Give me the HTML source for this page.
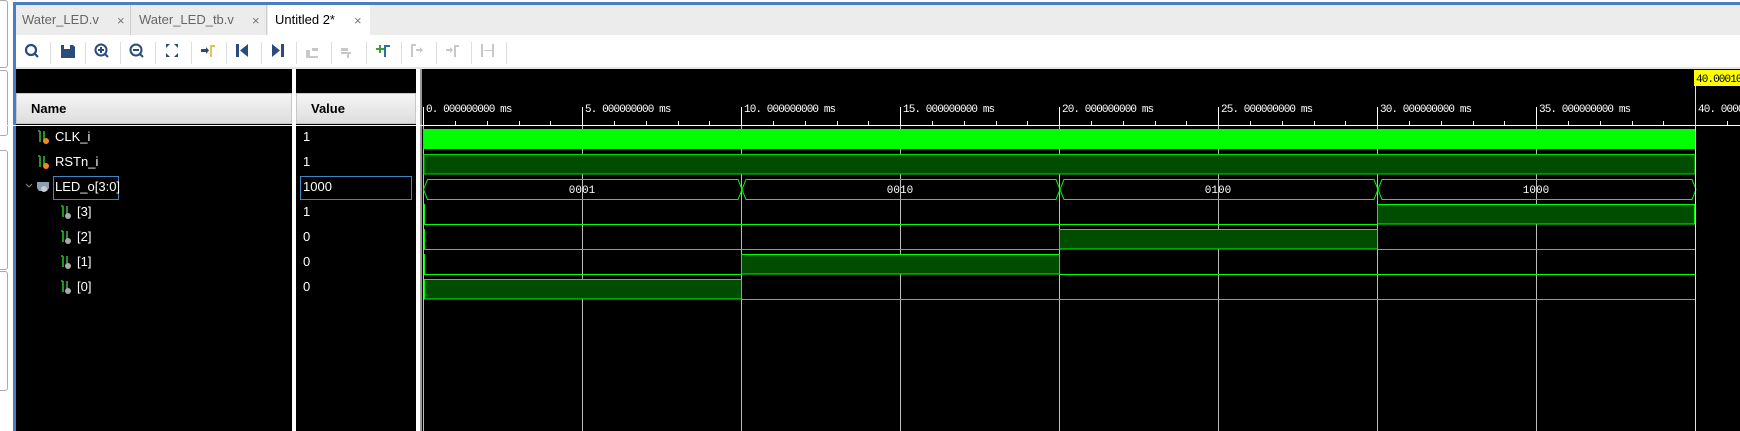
<!DOCTYPE html>
<html><head><meta charset="utf-8"><style>
*{margin:0;padding:0;box-sizing:border-box}
body{width:1740px;height:431px;overflow:hidden;background:#fff;position:relative;font-family:"Liberation Sans",sans-serif}
.a{position:absolute}
.tab{position:absolute;top:5px;height:30px;font-size:13px;line-height:30px;color:#666}
.tab span.x{position:absolute;font-size:13px;color:#777}
.sep{position:absolute;top:42px;width:1px;height:22px;background:#ddd}
.nm{position:absolute;color:#fff;font-size:13px}
</style></head><body>
<!-- left strip -->
<div class="a" style="left:-6px;top:0;width:14px;height:68px;border:1px solid #aaa;border-radius:3px"></div>
<div class="a" style="left:-6px;top:70px;width:14px;height:66px;border:1px solid #aaa;border-radius:3px"></div>
<div class="a" style="left:-6px;top:150px;width:14px;height:120px;border:1px solid #aaa;border-radius:3px"></div>
<div class="a" style="left:-6px;top:271px;width:14px;height:120px;border:1px solid #aaa;border-radius:3px"></div>
<!-- frame -->
<div class="a" style="left:13px;top:2px;width:1727px;height:3px;background:#4a7cc9"></div>
<div class="a" style="left:13px;top:2px;width:3px;height:429px;background:#4a7cc9"></div>
<div class="a" style="left:16px;top:5px;width:1724px;height:30px;background:#ececec"></div>
<div class="tab" style="left:16px;width:115px;border-right:1px solid #ccc"><span style="position:absolute;left:6px">Water_LED.v</span><span class="x" style="left:101px;top:1px">×</span></div>
<div class="tab" style="left:132px;width:135px;border-right:1px solid #ccc"><span style="position:absolute;left:7px">Water_LED_tb.v</span><span class="x" style="left:120px;top:1px">×</span></div>
<div class="tab" style="left:268px;width:102px;background:#fff;color:#000"><span style="position:absolute;left:7px">Untitled 2*</span><span class="x" style="left:86px;top:1px">×</span></div>
<div class="a" style="left:16px;top:35px;width:1724px;height:32px;background:#fff"></div>
<div class="a" style="left:16px;top:67px;width:1724px;height:2px;background:#e4e4e4"></div>
<!-- toolbar -->
<svg class="a" style="left:0;top:36px" width="520" height="32">
<g fill="none" stroke="#2b4a7e" stroke-width="2.2"><circle cx="31" cy="14" r="5"/><line x1="35" y1="18" x2="38" y2="21"/></g>
<path d="M61 9h12l2 2v11h-14z" fill="#2b4a7e"/><rect x="64" y="9" width="6" height="4" fill="#fff"/>
<g fill="none" stroke="#2b4a7e" stroke-width="2"><circle cx="101" cy="14" r="5.5"/><line x1="105" y1="18" x2="108" y2="21"/><line x1="98" y1="14" x2="104" y2="14"/><line x1="101" y1="11" x2="101" y2="17"/></g>
<g fill="none" stroke="#2b4a7e" stroke-width="2"><circle cx="136" cy="14" r="5.5"/><line x1="140" y1="18" x2="143" y2="21"/><line x1="133" y1="14" x2="139" y2="14"/></g>
<g fill="#2b4a7e"><path d="M166 8h4l-4 4z"/><path d="M178 8h-4l4 4z"/><path d="M166 21h4l-4-4z"/><path d="M178 21h-4l4-4z"/></g>
<path d="M201 13h5v-2l3 3.5-3 3.5v-2h-5z" fill="#2b4a7e"/><path d="M210 9h5v2h-3v10h-2z" fill="#e3c35a"/>
<rect x="236" y="8" width="3" height="13" fill="#2b4a7e"/><path d="M248 8v13l-8-6.5z" fill="#2b4a7e"/>
<rect x="281" y="8" width="3" height="13" fill="#2b4a7e"/><path d="M272 8v13l8-6.5z" fill="#2b4a7e"/>
<g fill="#c8c8c8"><path d="M306 14h4v6h8v2h-12zM312 12h6v3h-6z"/><path d="M341 12h7v3h-7zM341 16h10v2h-2v4h-2v-4h-6z"/><path d="M355 12h-1z"/></g>
<path d="M376 12h3v-3h2v3h3v2h-3v3h-2v-3h-3z" fill="#3aa23a"/><path d="M384 9h6v2h-4v10h-2z" fill="#2e6ea8"/>
<g fill="#c8c8c8"><path d="M411 8h5v2h-3v11h-2z"/><path d="M416 13h4v-2l3 3-3 3v-2h-4z"/><path d="M446 13h4v-2l3 3-3 3v-2h-4z"/><path d="M454 9h5v2h-3v10h-2z"/><rect x="481" y="8" width="2" height="13"/><rect x="492" y="8" width="2" height="13"/><rect x="484" y="14" width="8" height="1"/></g>
</svg>
<div class="sep" style="left:50px"></div><div class="sep" style="left:85px"></div><div class="sep" style="left:120px"></div><div class="sep" style="left:155px"></div><div class="sep" style="left:191px"></div><div class="sep" style="left:226px"></div><div class="sep" style="left:261px"></div><div class="sep" style="left:296px"></div><div class="sep" style="left:331px"></div><div class="sep" style="left:366px"></div><div class="sep" style="left:401px"></div><div class="sep" style="left:436px"></div><div class="sep" style="left:471px"></div><div class="sep" style="left:506px"></div>
<!-- panels -->
<div class="a" style="left:16px;top:69px;width:276px;height:362px;background:#000"></div>
<div class="a" style="left:292px;top:69px;width:4px;height:362px;background:#fff"></div>
<div class="a" style="left:296px;top:69px;width:120px;height:362px;background:#000"></div>
<div class="a" style="left:416px;top:69px;width:4px;height:362px;background:#fff"></div>
<div class="a" style="left:420px;top:69px;width:2px;height:362px;background:#999"></div>
<div class="a" style="left:422px;top:69px;width:1318px;height:362px;background:#000"></div>
<div class="a" style="left:16px;top:93px;width:276px;height:31px;background:linear-gradient(#f4f4f4,#dedede);border:1px solid #c8c8c8"></div>
<div class="a" style="left:296px;top:93px;width:120px;height:31px;background:linear-gradient(#f4f4f4,#dedede);border:1px solid #c8c8c8"></div>
<div class="nm" style="left:31px;top:101px;color:#000;font-weight:bold;font-size:13px">Name</div>
<div class="nm" style="left:311px;top:101px;color:#000;font-weight:bold;font-size:13px">Value</div>
<!-- icons for names -->
<svg class="a" style="left:16px;top:125px" width="80" height="180">
<g stroke="#2fb52f" stroke-width="1.6" fill="none"><path d="M24 6v11M28 6v11M24 6h-2"/><path d="M24 31v11M28 31v11M24 31h-2"/>
<path d="M47 81v11M51 81v11M47 81h-2"/><path d="M47 106v11M51 106v11M47 106h-2"/><path d="M47 131v11M51 131v11M47 131h-2"/><path d="M47 156v11M51 156v11M47 156h-2"/></g>
<circle cx="30" cy="16" r="3" fill="#f08a1c"/><circle cx="30" cy="41" r="3" fill="#f08a1c"/>
<g fill="#aaa"><circle cx="52" cy="91" r="3"/><circle cx="52" cy="116" r="3"/><circle cx="52" cy="141" r="3"/><circle cx="52" cy="166" r="3"/></g>
<path d="M10 59l3 3 3-3" stroke="#888" fill="none"/>
<path d="M21 57h12v6l-2 3h-8l-2-3z" fill="#8aa0b5"/><circle cx="28" cy="64" r="3" fill="#ccc"/>
</svg>
<div class="nm" style="left:55px;top:129px">CLK_i</div>
<div class="nm" style="left:55px;top:154px">RSTn_i</div>
<div class="a" style="left:53px;top:176px;width:66px;height:24px;border:1px solid #3f86c4"></div>
<div class="nm" style="left:55px;top:179px">LED_o[3:0]</div>
<div class="nm" style="left:77px;top:204px">[3]</div>
<div class="nm" style="left:77px;top:229px">[2]</div>
<div class="nm" style="left:77px;top:254px">[1]</div>
<div class="nm" style="left:77px;top:279px">[0]</div>
<div class="nm" style="left:303px;top:129px">1</div>
<div class="nm" style="left:303px;top:154px">1</div>
<div class="a" style="left:300px;top:176px;width:112px;height:24px;border:1px solid #3f86c4"></div>
<div class="nm" style="left:303px;top:179px">1000</div>
<div class="nm" style="left:303px;top:204px">1</div>
<div class="nm" style="left:303px;top:229px">0</div>
<div class="nm" style="left:303px;top:254px">0</div>
<div class="nm" style="left:303px;top:279px">0</div>
<!-- waves -->
<svg class="a" style="left:0;top:0" width="1740" height="431" font-family="Liberation Mono, monospace">
<line x1="0" y1="125.5" x2="1740" y2="125.5" stroke="#fff"/>
<g stroke="#fff">
<line x1="423.5" y1="107" x2="423.5" y2="125"/><line x1="582.5" y1="107" x2="582.5" y2="125"/><line x1="741.5" y1="107" x2="741.5" y2="125"/><line x1="900.5" y1="107" x2="900.5" y2="125"/><line x1="1059.5" y1="107" x2="1059.5" y2="125"/><line x1="1218.5" y1="107" x2="1218.5" y2="125"/><line x1="1377.5" y1="107" x2="1377.5" y2="125"/><line x1="1536.5" y1="107" x2="1536.5" y2="125"/><line x1="1695.5" y1="107" x2="1695.5" y2="125"/>
</g>
<g stroke="#fff" id="mt">
<path d="M455.5 121v4M487.5 121v4M519.5 121v4M550.5 121v4M614.5 121v4M646.5 121v4M678.5 121v4M709.5 121v4M773.5 121v4M805.5 121v4M837.5 121v4M868.5 121v4M932.5 121v4M964.5 121v4M996.5 121v4M1027.5 121v4M1091.5 121v4M1123.5 121v4M1155.5 121v4M1186.5 121v4M1250.5 121v4M1282.5 121v4M1314.5 121v4M1345.5 121v4M1409.5 121v4M1441.5 121v4M1473.5 121v4M1504.5 121v4M1568.5 121v4M1600.5 121v4M1632.5 121v4M1663.5 121v4M1727.5 121v4"/>
</g>
<g fill="#fff" font-size="11" letter-spacing="-0.9">
<text x="426" y="112">0. 000000000 ms</text><text x="585" y="112">5. 000000000 ms</text><text x="744" y="112">10. 000000000 ms</text><text x="903" y="112">15. 000000000 ms</text><text x="1062" y="112">20. 000000000 ms</text><text x="1221" y="112">25. 000000000 ms</text><text x="1380" y="112">30. 000000000 ms</text><text x="1539" y="112">35. 000000000 ms</text><text x="1698" y="112">40. 000000</text>
</g>
<!-- grid -->
<g stroke="#bbb"><path d="M423.5 126V431M582.5 126V431M741.5 126V431M900.5 126V431M1059.5 126V431M1218.5 126V431M1377.5 126V431M1536.5 126V431"/></g>
<!-- CLK -->
<rect x="423" y="129" width="1272" height="20" fill="#00ff00"/>
<!-- RSTn -->
<rect x="424" y="154.5" width="1271" height="19.5" fill="#004d00" stroke="#00e000"/>
<!-- bus -->
<g fill="none" stroke="#00ff00" stroke-width="1">
<path d="M423.5 189.5l4-10H738l4 10-4 10H427.5z"/>
<path d="M742 189.5l4-10H1056l4 10-4 10H746z"/>
<path d="M1060 189.5l4-10H1374l4 10-4 10H1064z"/>
<path d="M1378 189.5l4-10H1692l4 10-4 10H1382z"/>
</g>
<g fill="#fff" font-size="11" text-anchor="middle"><text x="582" y="193">0001</text><text x="900" y="193">0010</text><text x="1218" y="193">0100</text><text x="1536" y="193">1000</text></g>
<!-- bits -->
<g stroke="#00ff00" fill="none">
<path d="M424.5 204v20.5H1377.5"/><rect x="1377.5" y="204.5" width="317" height="19.5" fill="#004d00"/>
<path d="M424.5 229v20.5H1059.5"/><rect x="1059.5" y="229.5" width="318" height="19.5" fill="#004d00"/><path d="M1377.5 249.5H1695"/>
<path d="M424.5 254v20.5H741.5"/><rect x="741.5" y="254.5" width="318" height="19.5" fill="#004d00"/><path d="M1059.5 274.5H1695"/>
<rect x="424.5" y="279.5" width="317" height="19.5" fill="#004d00"/><path d="M741.5 299.5H1695"/>
</g>
<!-- cursor -->
<line x1="1695.5" y1="86" x2="1695.5" y2="431" stroke="#ffff00"/>
<rect x="1694" y="70" width="46" height="16" fill="#ffff00"/>
<text x="1696" y="82" font-size="11" letter-spacing="-0.9" fill="#000">40.00010</text>
</svg>
</body></html>
